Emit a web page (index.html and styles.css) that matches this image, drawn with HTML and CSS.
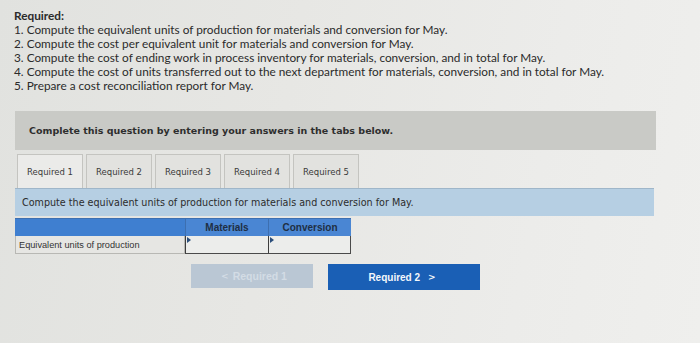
FILE: index.html
```html
<!DOCTYPE html>
<html>
<head>
<meta charset="utf-8">
<link rel="stylesheet" href="styles.css">
</head>
<body>
<div class="page">
  <div class="req">
    <div class="req-title">Required:</div>
    <div class="req-line">1. Compute the equivalent units of production for materials and conversion for May.</div>
    <div class="req-line">2. Compute the cost per equivalent unit for materials and conversion for May.</div>
    <div class="req-line">3. Compute the cost of ending work in process inventory for materials, conversion, and in total for May.</div>
    <div class="req-line">4. Compute the cost of units transferred out to the next department for materials, conversion, and in total for May.</div>
    <div class="req-line">5. Prepare a cost reconciliation report for May.</div>
  </div>

  <div class="banner">Complete this question by entering your answers in the tabs below.</div>

  <div class="tabs">
    <div class="tab active">Required 1</div>
    <div class="tab">Required 2</div>
    <div class="tab">Required 3</div>
    <div class="tab">Required 4</div>
    <div class="tab">Required 5</div>
  </div>

  <div class="infobar">Compute the equivalent units of production for materials and conversion for May.</div>

  <div class="grid">
    <div class="hcell hlabel"></div>
    <div class="hcell">Materials</div>
    <div class="hcell">Conversion</div>
    <div class="lcell">Equivalent units of production</div>
    <div class="icell"><span class="flag"></span></div>
    <div class="icell"><span class="flag"></span></div>
  </div>

  <div class="nav">
    <div class="btn disabled"><span class="chev">&lt;</span> Required 1</div>
    <div class="btn primary">Required 2 <span class="chev">&gt;</span></div>
  </div>
</div>
</body>
</html>
```

FILE: styles.css
```css
html, body {
  margin: 0;
  padding: 0;
}
body {
  width: 700px;
  height: 343px;
  overflow: hidden;
  background: linear-gradient(100deg, #e1e2df 0%, #e7e7e4 40%, #ececea 75%, #efefed 100%);
  font-family: "Lato", "Liberation Sans", sans-serif;
  color: #2a2a2a;
}
.page {
  padding: 9px 0 0 14px;
}
.req {
  font-size: 11.8px;
  line-height: 14px;
  color: #2b2b2b;
}
.req-title {
  font-weight: bold;
}
.banner {
  margin-top: 18px;
  width: 627px;
  height: 39px;
  margin-left: 1px;
  padding-left: 14px;
  background: #c9cac6;
  display: flex;
  align-items: center;
  font-family: "DejaVu Sans", Verdana, sans-serif;
  font-weight: bold;
  font-size: 9.5px;
  color: #2e2e2e;
}
.tabs {
  display: flex;
  gap: 3px;
  margin-top: 4px;
  margin-left: 3px;
}
.tab {
  width: 66px;
  height: 34px;
  box-sizing: border-box;
  border: 1px solid #c4c4c0;
  border-bottom: none;
  background: #e2e2df;
  display: flex;
  align-items: center;
  justify-content: center;
  font-family: "DejaVu Sans", Verdana, sans-serif;
  font-size: 8.5px;
  color: #3a3a3a;
}
.tab.active {
  background: #ebebe9;
}
.infobar {
  margin-left: 1px;
  width: 632px;
  height: 27px;
  padding-left: 7px;
  background: #b6cfe3;
  border-top: 1px solid #9fb6c9;
  display: flex;
  align-items: center;
  font-family: "DejaVu Sans", Verdana, sans-serif;
  font-size: 9.6px;
  color: #2c2c2c;
}
.grid {
  display: grid;
  grid-template-columns: 170px 83px 83px;
  grid-template-rows: 18px 18px;
  margin-left: 1px;
  margin-top: 2px;
  font-family: "Liberation Sans", Arial, sans-serif;
}
.hcell {
  background: #4a86d3;
  border-top: 1px solid #3d6fb0;
  border-left: 1px solid #3d6fb0;
  display: flex;
  align-items: center;
  justify-content: center;
  font-weight: bold;
  font-size: 10px;
  color: #1f2f44;
}
.hcell.hlabel {
  border-left: none;
  background: #3f7fd0;
}
.lcell {
  background: #e6e6e3;
  border: 1px solid #b8b8b4;
  border-top: none;
  display: flex;
  align-items: center;
  padding-left: 3px;
  font-size: 9.2px;
  color: #333;
}
.icell {
  position: relative;
  background: #ecedeb;
  border-left: 1px solid #3e3e3e;
  border-bottom: 1px solid #4a4a4a;
}
.icell:last-child {
  border-right: 1px solid #4a4a4a;
}
.flag {
  position: absolute;
  top: 1px;
  left: 1px;
  width: 0;
  height: 0;
  border-top: 3px solid transparent;
  border-bottom: 3px solid transparent;
  border-left: 4px solid #2a4d7a;
}
.nav {
  display: flex;
  gap: 15px;
  margin-top: 8px;
  margin-left: 177px;
  align-items: center;
}
.btn {
  display: flex;
  align-items: center;
  justify-content: center;
  font-family: "Liberation Sans", Arial, sans-serif;
  font-weight: bold;
  font-size: 10px;
}
.btn.disabled {
  width: 122px;
  height: 24px;
  background: #bac7d4;
  color: #d3dce5;
  font-size: 10.5px;
}
.btn.primary {
  width: 152px;
  height: 26px;
  margin-top: 2px;
  background: #1a5fb5;
  color: #f4f7fb;
}
.chev {
  margin: 0 4px;
  font-family: "DejaVu Sans", sans-serif;
  font-size: 9px;
}
.btn.primary .chev {
  margin-left: 8px;
}
```
